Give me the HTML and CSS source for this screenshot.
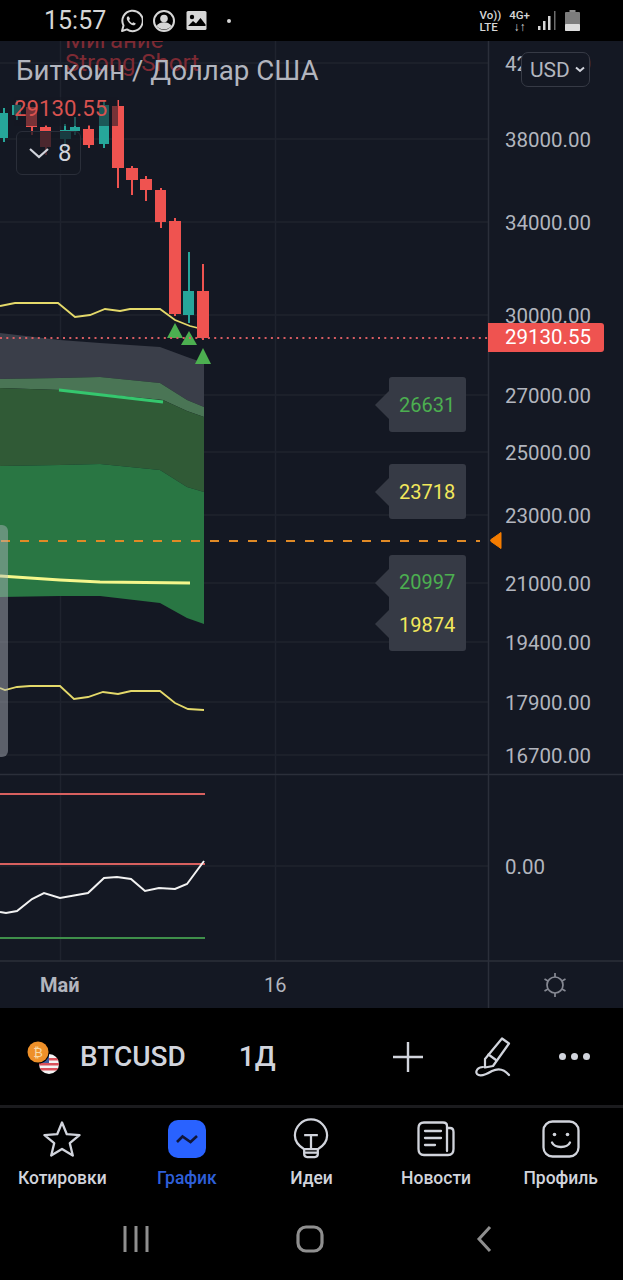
FILE: index.html
```html
<!DOCTYPE html>
<html lang="ru">
<head>
    <meta charset="UTF-8">
    <meta name="viewport" content="width=device-width, initial-scale=1.0">
    <title>BTCUSD</title>
    <link rel="stylesheet" href="styles.css">
</head>
<body>
    <div class="screen">
        <!-- status bar -->
        <div class="status">
            <div class="status-left">
                <span class="time">15:57</span>
                <svg width="24" height="24" viewBox="0 0 24 24">
                    <path d="M3 22l1.500-5.500A10.200 10.200 0 1 1 8 20.400z" fill="none" stroke="#d6d6d6" stroke-width="2" stroke-linejoin="round"/>
                    <path d="M8.500 7.500c-1 1-1 2.600.2 4.500 1.300 2.200 3.300 3.800 5.300 4.300 1.300.3 2.500-.5 2.800-1.700l-2.500-1.400-1.200 1c-1.300-.6-2.400-1.800-3-3.100l1-1.100-1.200-2.600z" fill="#d6d6d6"/>
                </svg>
                <svg width="22" height="22" viewBox="0 0 22 22">
                    <circle cx="11" cy="11" r="10" fill="none" stroke="#d6d6d6" stroke-width="2"/>
                    <circle cx="11" cy="8.500" r="3.800" fill="#d6d6d6"/>
                    <path d="M3.500 16c2-3 4.500-3.800 7.500-3.800s5.500.8 7.500 3.800a10 10 0 0 1-15 0z" fill="#d6d6d6"/>
                </svg>
                <svg class="status-image" width="21" height="19" viewBox="0 0 21 19">
                    <rect x="0.500" y="0" width="20" height="19" rx="1.500" fill="#d6d6d6"/>
                    <circle cx="6" cy="6" r="2.200" fill="#000"/>
                    <path d="M2 15l5-5 3 2.500 4.500-5.500 5 6.500v1.500H2z" fill="#000"/>
                </svg>
                <span class="status-dot"></span>
            </div>
            <div class="status-right">
                <div class="net-label">Vo))<br>LTE</div>
                <div class="net-label net-4g">4G+<br><span class="net-arrows">↓↑</span></div>
                <svg width="19" height="22" viewBox="0 0 19 22">
                    <rect x="0" y="16" width="2.500" height="4" fill="#d6d6d6"/>
                    <rect x="5" y="11" width="2.500" height="9" fill="#d6d6d6"/>
                    <rect x="10" y="6" width="2.500" height="14" fill="#d6d6d6"/>
                    <rect x="16" y="1" width="1.500" height="19" fill="#6d6d6d"/>
                </svg>
                <svg width="15" height="21" viewBox="0 0 15 21">
                    <rect x="4.500" y="0" width="6" height="3" fill="#8c8c8c"/>
                    <rect x="0" y="2" width="15" height="19" rx="1" fill="#7d7d7d"/>
                    <rect x="0" y="14" width="15" height="7" rx="1" fill="#dcdcdc"/>
                </svg>
            </div>
        </div>

        <!-- chart -->
        <div class="chart">
            <svg class="chart-svg" width="623" height="967" viewBox="0 41 623 967">
                <!-- grid -->
                <g stroke="#1f232e" stroke-width="1.500" fill="none">
                    <path d="M60.500 41V961M275.500 41V961"/>
                    <path d="M0 63H488M0 139H488M0 222H488M0 315H488M0 395H488M0 452H488M0 515H488M0 583H488M0 642H488M0 702H488M0 755H488M0 866H488"/>
                </g>
                <g stroke="#2b2f3a" stroke-width="1.500" fill="none">
                    <path d="M488.500 41V1008"/>
                    <path d="M0 774.500H623M0 961H623"/>
                </g>

                <!-- zones -->
                <path d="M0 333L60 340L100 343L160 347L187 357L204 363V407L187 400L160 383L100 377L60 378L0 379Z" fill="#3a3e49"/>
                <path d="M0 379L60 378L100 377L160 383L187 400L204 407V417L187 411L163 400L100 394L60 390L0 388Z" fill="#4a7555"/>
                <path d="M0 388L60 390L100 394L163 400L187 411L204 417V492L187 487L160 470L100 464L60 465L0 466Z" fill="#305a36"/>
                <path d="M0 466L60 465L100 464L160 470L187 487L204 492V624L187 618L160 603L100 596L60 596L0 597Z" fill="#297643"/>
                <path d="M59 390L163 402" stroke="#35c76e" stroke-width="3" fill="none"/>
                <path d="M0 576L60 580L100 582L190 583" stroke="#f5f78c" stroke-width="3" fill="none"/>

                <!-- yellow channel lines -->
                <path d="M0 306L15 303L58 303L75 317L90 315L105 309L120 311L130 309L160 309L175 320L190 326L198 328" stroke="#e4d96a" stroke-width="1.800" fill="none"/>
                <path d="M0 688L5 690L17 687L30 686L60 686L74 699L88 697L103 692L118 694L131 691L160 691L175 703L188 709L204 710" stroke="#e4d96a" stroke-width="1.800" fill="none"/>

                <!-- candles -->
                <g fill="#26a69a">
                    <rect x="3" y="108" width="2" height="34"/>
                    <rect x="-2" y="113" width="10" height="25"/>
                    <rect x="16" y="100" width="2" height="20"/>
                    <rect x="12" y="105" width="9" height="10"/>
                    <rect x="64" y="124" width="2" height="24"/>
                    <rect x="60" y="130" width="11" height="9"/>
                    <rect x="74" y="117" width="2" height="18"/>
                    <rect x="70" y="127" width="10" height="4"/>
                    <rect x="103" y="100" width="2" height="48"/>
                    <rect x="99" y="105" width="10" height="39"/>
                    <rect x="188" y="252" width="2" height="71"/>
                    <rect x="183" y="291" width="11" height="24"/>
                </g>
                <g fill="#ef5350">
                    <rect x="31" y="107" width="2" height="28"/>
                    <rect x="26" y="107" width="11" height="20"/>
                    <rect x="45" y="125" width="2" height="30"/>
                    <rect x="40" y="127" width="11" height="20"/>
                    <rect x="88" y="125" width="2" height="23"/>
                    <rect x="83" y="129" width="11" height="16"/>
                    <rect x="117" y="100" width="2" height="88"/>
                    <rect x="112" y="106" width="12" height="62"/>
                    <rect x="131" y="166" width="2" height="29"/>
                    <rect x="126" y="168" width="12" height="12"/>
                    <rect x="145" y="176" width="2" height="25"/>
                    <rect x="140" y="179" width="12" height="11"/>
                    <rect x="160" y="188" width="2" height="40"/>
                    <rect x="155" y="190" width="11" height="32"/>
                    <rect x="174" y="218" width="2" height="98"/>
                    <rect x="169" y="221" width="12" height="93"/>
                    <rect x="202" y="264" width="2" height="76"/>
                    <rect x="197" y="291" width="12" height="47"/>
                </g>

                <!-- signals -->
                <g fill="#4caf50">
                    <path d="M175 323L183 338H167Z"/>
                    <path d="M189 331L197 345H181Z"/>
                    <path d="M203 348L211 364H195Z"/>
                </g>

                <!-- last price and alert lines -->
                <path d="M0 338H488" stroke="#d85c62" stroke-width="2" stroke-dasharray="2 4.300" fill="none"/>
                <path d="M1 541H480" stroke="#e08a26" stroke-width="2" stroke-dasharray="9 10" fill="none"/>

                <!-- lower pane -->
                <path d="M0 794H205M0 864H205" stroke="#d8605f" stroke-width="2" fill="none"/>
                <path d="M0 938H205" stroke="#3f8f4a" stroke-width="2" fill="none"/>
                <path d="M0 912L6 913L17 911L32 899L44 893L60 898L88 893L104 878L117 877L131 879L145 891L159 888L175 889L187 884L204 861" stroke="#f2f2f2" stroke-width="2" fill="none"/>
            </svg>

            <div class="side-handle"></div>

            <div class="signal-name signal-blink">Мигание</div>
            <div class="signal-name signal-short">Strong Short</div>
            <div class="symbol-title">Биткоин / Доллар США</div>
            <div class="legend-price">29130.55</div>
            <div class="legend-toggle">
                <svg width="20" height="12" viewBox="0 0 20 12"><path d="M1 2l9 8 9-8" fill="none" stroke="#d1d4dc" stroke-width="2.200"/></svg>
                <span>8</span>
            </div>

            <!-- price scale -->
            <span class="tick" style="top: 9px">42000.00</span>
            <span class="tick" style="top: 85px">38000.00</span>
            <span class="tick" style="top: 168px">34000.00</span>
            <span class="tick" style="top: 261px">30000.00</span>
            <span class="tick" style="top: 341px">27000.00</span>
            <span class="tick" style="top: 398px">25000.00</span>
            <span class="tick" style="top: 461px">23000.00</span>
            <span class="tick" style="top: 529px">21000.00</span>
            <span class="tick" style="top: 588px">19400.00</span>
            <span class="tick" style="top: 648px">17900.00</span>
            <span class="tick" style="top: 701px">16700.00</span>
            <span class="tick" style="top: 812px">0.00</span>

            <div class="currency">USD
                <svg width="10" height="7" viewBox="0 0 10 7"><path d="M1 1.500l4 3.500 4-3.500" fill="none" stroke="#d1d4dc" stroke-width="2"/></svg>
            </div>
            <div class="last-price">29130.55</div>
            <svg class="alert-mark" width="14" height="19" viewBox="0 0 14 19"><path d="M12 1.500V17.500L2 10.500Q1 9.500 2 8.500Z" fill="#f57c00" stroke="#f57c00" stroke-linejoin="round"/></svg>

            <!-- value tags -->
            <div class="tag tag-one"><span class="val-green">26631</span></div>
            <div class="tag tag-two"><span class="val-yellow">23718</span></div>
            <div class="tag tag-three">
                <span class="val-green">20997</span>
                <span class="val-yellow">19874</span>
            </div>

            <!-- time scale -->
            <span class="time-label time-month">Май</span>
            <span class="time-label time-day">16</span>
            <svg class="sun" width="26" height="26" viewBox="0 0 26 26" fill="none" stroke="#868993" stroke-width="1.700">
                <circle cx="13" cy="13" r="8"/>
                <path d="M13 1V5M13 21V25M2.500 7L6 9M20 17L23.500 19M2.500 19L6 17M20 9L23.500 7"/>
            </svg>
        </div>

        <!-- symbol toolbar -->
        <div class="toolbar">
            <div class="coin-pair">
                <svg width="36" height="36" viewBox="0 0 36 36">
                    <defs>
                        <clipPath id="flagClip"><circle cx="23" cy="24" r="10"/></clipPath>
                    </defs>
                    <g clip-path="url(#flagClip)">
                        <rect x="13" y="14" width="20" height="20" fill="#f4f4f4"/>
                        <rect x="13" y="18" width="20" height="2.500" fill="#d9505a"/>
                        <rect x="13" y="23" width="20" height="2.500" fill="#d9505a"/>
                        <rect x="13" y="28" width="20" height="2.500" fill="#d9505a"/>
                        <rect x="13" y="14" width="10" height="9" fill="#3d5a98"/>
                    </g>
                    <circle cx="12" cy="12" r="11.500" fill="#000"/>
                    <circle cx="12" cy="12" r="10.500" fill="#ee9029"/>
                    <text x="12" y="17" class="coin-mark">₿</text>
                </svg>
            </div>
            <span class="symbol">BTCUSD</span>
            <span class="interval">1Д</span>
            <div class="toolbar-actions">
                <svg class="action-plus" width="32" height="32" viewBox="0 0 32 32"><path d="M16 1V31M1 16H31" stroke="#d1d4dc" stroke-width="2.400"/></svg>
                <svg class="action-pen" width="38" height="42" viewBox="0 0 38 42" fill="none" stroke="#d1d4dc" stroke-width="2.200" stroke-linejoin="round" stroke-linecap="round">
                    <path d="M28 2.500L35 7.500L19 30L11 31.500L11 23Z"/>
                    <path d="M14.500 18.500L22 24"/>
                    <path d="M35 39C30 33 24 32 18 35C13 38 6 41 3 38C1 35 4 31 9 31"/>
                </svg>
                <div class="dots"><i></i><i></i><i></i></div>
            </div>
        </div>

        <!-- tabs -->
        <div class="tabs">
            <div class="tab">
                <div class="tab-icon">
                    <svg width="38" height="38" viewBox="0 0 38 38"><path d="M19 2.500L23.800 14.200L36.500 15.100L26.800 23.200L29.800 35.500L19 28.900L8.200 35.500L11.200 23.200L1.500 15.100L14.200 14.200Z" fill="none" stroke="#d1d4dc" stroke-width="2.300" stroke-linejoin="round"/></svg>
                </div>
                <span>Котировки</span>
            </div>
            <div class="tab tab-active">
                <div class="tab-icon">
                    <svg width="38" height="38" viewBox="0 0 38 38"><rect x="0" y="0" width="38" height="38" rx="10" fill="#2962ff"/><path d="M9 22L14.500 16.500L22.500 22L29 16" fill="none" stroke="#10163a" stroke-width="2.600"/></svg>
                </div>
                <span>График</span>
            </div>
            <div class="tab">
                <div class="tab-icon">
                    <svg width="36" height="41" viewBox="0 0 36 42" fill="none" stroke="#d1d4dc" stroke-width="2.300">
                        <path d="M11 32C6 29 1.500 24.500 1.500 18A16.500 16.500 0 0 1 34.500 18C34.500 24.500 30 29 25 32Z"/>
                        <path d="M11 17.500H25M18 17.500V31"/>
                        <path d="M11 32V37Q11 40 14 40H22Q25 40 25 37V32"/>
                        <path d="M11 35.500H25"/>
                    </svg>
                </div>
                <span>Идеи</span>
            </div>
            <div class="tab">
                <div class="tab-icon">
                    <svg width="38" height="36" viewBox="0 0 38 36" fill="none" stroke="#d1d4dc" stroke-width="2.300" stroke-linecap="round">
                        <path d="M30 7V5Q30 1.500 26 1.500H7Q1.500 1.500 1.500 7V28Q1.500 34 7 34H31Q36.500 34 36.500 28V11Q36.500 7 33 7H30V30"/>
                        <path d="M8 10H24M8 17H24M8 24H18"/>
                    </svg>
                </div>
                <span>Новости</span>
            </div>
            <div class="tab">
                <div class="tab-icon">
                    <svg width="38" height="38" viewBox="0 0 38 38" fill="none" stroke="#d1d4dc" stroke-width="2.300">
                        <rect x="1.500" y="1.500" width="35" height="35" rx="9"/>
                        <circle cx="12.500" cy="14.500" r="1.800" fill="#d1d4dc" stroke="none"/>
                        <circle cx="25.500" cy="14.500" r="1.800" fill="#d1d4dc" stroke="none"/>
                        <path d="M10 22.500C13 28.500 25 28.500 28 22.500" stroke-linecap="round"/>
                    </svg>
                </div>
                <span>Профиль</span>
            </div>
        </div>

        <!-- android nav -->
        <div class="nav">
            <svg width="26" height="26" viewBox="0 0 26 26"><path d="M2 0V26M13 0V26M24 0V26" stroke="#8f8f8f" stroke-width="3"/></svg>
            <svg width="28" height="28" viewBox="0 0 28 28"><rect x="2" y="2" width="24" height="24" rx="8" fill="none" stroke="#8f8f8f" stroke-width="3.200"/></svg>
            <svg width="16" height="28" viewBox="0 0 16 28"><path d="M14 2L3 14L14 26" fill="none" stroke="#8f8f8f" stroke-width="3"/></svg>
        </div>
    </div>
</body>
</html>
```

FILE: styles.css
```css
* {
    margin: 0;
    padding: 0;
    box-sizing: border-box;
}

body {
    font-family: Roboto, "Liberation Sans", sans-serif;
    background-color: #000;
    color: #d1d4dc;
}

.screen {
    width: 623px;
    height: 1280px;
    display: flex;
    flex-direction: column;
    overflow: hidden;
}

/* status bar */
.status {
    height: 41px;
    flex-shrink: 0;
    display: flex;
    justify-content: space-between;
    align-items: center;
    padding: 0 43px 0 44px;
    background-color: #000;
}

.status-left,
.status-right {
    display: flex;
    align-items: center;
}

.status-left {
    gap: 10px;
}

.status-right {
    gap: 8px;
}

.time {
    font-size: 25px;
    color: #d6d6d6;
    margin-right: 3px;
}

.status-image {
    margin-left: 1px;
}

.status-dot {
    width: 4px;
    height: 4px;
    margin-left: 10px;
    border-radius: 50%;
    background-color: #d6d6d6;
}

.net-label {
    font-size: 11.500px;
    line-height: 12px;
    font-weight: 500;
    color: #d6d6d6;
}

.net-4g {
    text-align: center;
}

.net-arrows {
    font-size: 12px;
    font-weight: 700;
}

/* chart */
.chart {
    position: relative;
    height: 967px;
    flex-shrink: 0;
    overflow: hidden;
    background-color: #141823;
}

.chart-svg {
    position: absolute;
    top: 0;
    left: 0;
    display: block;
}

.side-handle {
    position: absolute;
    left: 0;
    top: 484px;
    width: 8px;
    height: 232px;
    border-radius: 0 6px 6px 0;
    background-color: rgba(180, 184, 192, 0.45);
}

.signal-name {
    position: absolute;
    left: 65px;
    font-size: 24px;
    line-height: 26px;
    color: #7d2a33;
}

.signal-blink {
    top: -14px;
}

.signal-short {
    top: 9px;
}

.symbol-title {
    position: absolute;
    left: 16px;
    top: 12px;
    font-size: 27.700px;
    line-height: 36px;
    color: #b2b5be;
}

.legend-price {
    position: absolute;
    left: 14px;
    top: 56px;
    width: 104px;
    height: 29px;
    font-size: 22.200px;
    line-height: 23px;
    color: #d9524f;
    background-color: rgba(20, 24, 35, 0.55);
}

.legend-toggle {
    position: absolute;
    left: 16px;
    top: 90px;
    width: 65px;
    height: 44px;
    display: flex;
    align-items: center;
    gap: 9px;
    padding-left: 12px;
    font-size: 24px;
    color: #d1d4dc;
    border: 1.500px solid #2a2e39;
    border-radius: 6px;
    background-color: rgba(20, 24, 35, 0.75);
}

/* price scale */
.tick {
    position: absolute;
    left: 505px;
    font-size: 20.500px;
    line-height: 28px;
    color: #b2b5be;
}

.currency {
    position: absolute;
    left: 521px;
    top: 11px;
    width: 69px;
    height: 35px;
    display: flex;
    align-items: center;
    gap: 5px;
    padding-left: 8px;
    font-size: 21px;
    color: #b2b5be;
    border: 1.500px solid #363a45;
    border-radius: 7px;
    background-color: #141823;
}

.last-price {
    position: absolute;
    left: 488px;
    top: 282px;
    width: 116px;
    height: 29px;
    padding-left: 17px;
    font-size: 20.500px;
    line-height: 29px;
    color: #fff;
    border-radius: 0 3px 3px 0;
    background-color: #ef5350;
}

.alert-mark {
    position: absolute;
    left: 489px;
    top: 490px;
}

/* value tags */
.tag {
    position: absolute;
    left: 389px;
    width: 77px;
    padding-left: 10px;
    display: flex;
    flex-direction: column;
    justify-content: center;
    font-size: 20px;
    border-radius: 3px;
    background-color: #363a45;
}

.tag::before {
    content: "";
    position: absolute;
    left: -14px;
    top: 14px;
    border-style: solid;
    border-width: 14px 14px 14px 0;
    border-color: transparent #363a45 transparent transparent;
}

.tag-one {
    top: 336px;
    height: 55px;
}

.tag-two {
    top: 423px;
    height: 55px;
}

.tag-three {
    top: 514px;
    height: 96px;
    gap: 19px;
}

.tag-three::after {
    content: "";
    position: absolute;
    left: -14px;
    top: 55px;
    border-style: solid;
    border-width: 14px 14px 14px 0;
    border-color: transparent #363a45 transparent transparent;
}

.val-green {
    color: #4caf50;
}

.val-yellow {
    color: #f2e85c;
}

/* time scale */
.time-label {
    position: absolute;
    top: 930px;
    font-size: 20px;
    line-height: 28px;
    color: #b2b5be;
}

.time-month {
    left: 40px;
    font-weight: 700;
}

.time-day {
    left: 264px;
}

.sun {
    position: absolute;
    left: 542px;
    top: 931px;
}

/* symbol toolbar */
.toolbar {
    height: 97px;
    flex-shrink: 0;
    display: flex;
    align-items: center;
    padding: 0 33px 0 26px;
    background-color: #000;
}

.coin-pair {
    width: 54px;
    height: 36px;
    margin-top: 2px;
}

.coin-mark {
    font-family: "DejaVu Sans", sans-serif;
    font-size: 13px;
    text-anchor: middle;
    fill: #f8d9a8;
}

.symbol {
    font-size: 28px;
    font-weight: 500;
    color: #d1d4dc;
}

.interval {
    margin-left: 53px;
    font-size: 28px;
    font-weight: 500;
    color: #d1d4dc;
}

.toolbar-actions {
    margin-left: auto;
    display: flex;
    align-items: center;
}

.action-pen {
    margin-left: 50px;
    margin-right: 47px;
}

.dots {
    display: flex;
    gap: 5px;
}

.dots i {
    width: 7px;
    height: 7px;
    border-radius: 50%;
    background-color: #d1d4dc;
}

/* tabs */
.tabs {
    height: 100px;
    flex-shrink: 0;
    display: grid;
    grid-template-columns: repeat(5, 1fr);
    border-top: 3px solid #1b1b1e;
    background-color: #000;
}

.tab {
    display: flex;
    flex-direction: column;
    align-items: center;
    padding-top: 10px;
    gap: 9px;
    font-size: 17.500px;
    font-weight: 500;
    line-height: 20px;
    color: #d1d4dc;
}

.tab-icon {
    height: 41px;
    display: flex;
    align-items: center;
}

.tab-active {
    color: #2e5fd8;
}

/* android nav */
.nav {
    flex: 1;
    display: grid;
    grid-template-columns: 173px 180px 1fr;
    padding: 0 0 7px 123px;
    align-items: center;
    background-color: #000;
}
```
